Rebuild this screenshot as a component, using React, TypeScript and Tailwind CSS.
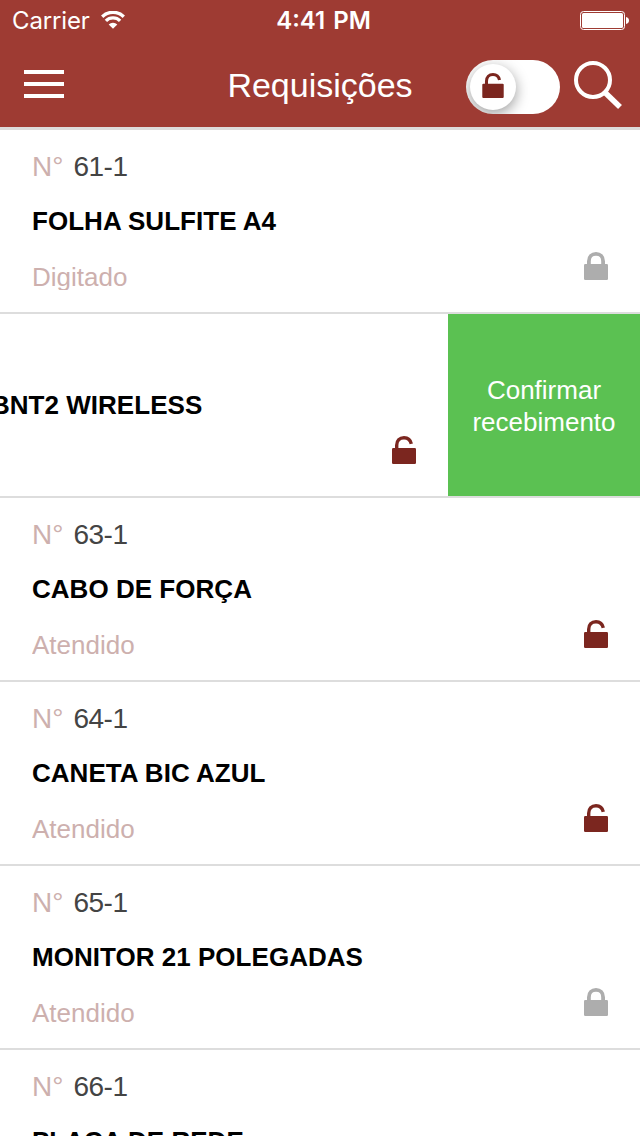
import { useState } from 'react';

type Request = {
  number: string;
  product: string;
  status: string;
  open: boolean;
};

const requests: Request[] = [
  { number: '61-1', product: 'FOLHA SULFITE A4', status: 'Digitado', open: false },
  { number: '62-1', product: 'TECLADO ABNT2 WIRELESS', status: 'Atendido', open: true },
  { number: '63-1', product: 'CABO DE FORÇA', status: 'Atendido', open: true },
  { number: '64-1', product: 'CANETA BIC AZUL', status: 'Atendido', open: true },
  { number: '65-1', product: 'MONITOR 21 POLEGADAS', status: 'Atendido', open: false },
  { number: '66-1', product: 'PLACA DE REDE', status: 'Atendido', open: true }
];

// Padlock, open or closed
function LockIcon({ open, className }: { open: boolean; className?: string }) {
  return (
    <svg viewBox="0 0 24 28" fill="none" className={className}>
      <rect x="0" y="12" width="24" height="16" rx="1.2" fill="currentColor" />
      {open ? (
        <path d="M4.700 13V9.200C4.700 4.700 7.600 1.700 12 1.700c3.700 0 6.500 2.300 7.300 6.200" stroke="currentColor" strokeWidth="3.400" />
      ) : (
        <path d="M4.900 13V9.200C4.900 4.900 7.800 1.900 12 1.900s7.100 3 7.100 7.300V13" stroke="currentColor" strokeWidth="3.800" />
      )}
    </svg>
  );
}

function StatusBar() {
  return (
    <div className="flex h-10 items-center pt-0.5 font-['Inter',sans-serif] text-[24px] leading-[38px] text-white">
      <div className="flex w-[200px] items-center pl-3">
        <span className="w-[78px] tracking-[-0.15px]">Carrier</span>
        <svg viewBox="0 0 24 18" fill="none" className="mb-0.5 ml-[11px] h-[18px] w-6">
          <path d="M1.200 5.700a15.400 15.400 0 0 1 21.600 0" stroke="white" strokeWidth="3.300" />
          <path d="M4.900 9.900a10 10 0 0 1 14.200 0" stroke="white" strokeWidth="3.300" />
          <path d="M7.700 13.500a6 6 0 0 1 8.600 0L12 17.800z" fill="white" />
        </svg>
      </div>
      <div className="flex-1 pl-[7px] text-center font-semibold [word-spacing:2px]">4:41 PM</div>
      <div className="flex w-[200px] justify-end pr-[11px] pb-0.5">
        <svg viewBox="0 0 49 19" fill="none" className="h-[19px] w-[49px]">
          <rect x="0.5" y="0.5" width="44" height="18" rx="3" stroke="white" />
          <rect x="2" y="2" width="41" height="15" rx="1.5" fill="white" />
          <path d="M46 6c2 .4 3 1.700 3 3.500s-1 3.100-3 3.500z" fill="white" />
        </svg>
      </div>
    </div>
  );
}

function Header() {
  const [onlyOpen, setOnlyOpen] = useState(true);

  return (
    <header className="h-[130px] shrink-0 border-b-[3px] border-[#dddbdb] bg-[#9e3b33]">
      <StatusBar />
      <div className="flex items-start">
        <div className="w-[200px] pt-[30px] pl-6">
          <button className="flex w-10 flex-col gap-2" aria-label="Menu">
            <span className="h-1 bg-white" />
            <span className="h-1 bg-white" />
            <span className="h-1 bg-white" />
          </button>
        </div>
        <h1 className="flex-1 pt-[23px] text-center text-[34px] leading-[44px] whitespace-nowrap text-white">
          Requisições
        </h1>
        <div className="flex w-[200px] items-start justify-end gap-[14px] pt-5 pr-[18px]">
          <button
            onClick={() => setOnlyOpen(!onlyOpen)}
            className={`flex h-[54px] w-[94px] overflow-hidden rounded-full bg-white p-1 ${onlyOpen ? 'justify-start' : 'justify-end'}`}
          >
            <span className="flex size-[46px] justify-center rounded-full bg-white pt-[9px] shadow-[0_4px_14px_rgba(0,0,0,0.4)]">
              <LockIcon open={onlyOpen} className="h-[25px] w-[22px] text-[#7b261f]" />
            </span>
          </button>
          <svg viewBox="0 0 48 49" fill="none" className="mt-px h-[49px] w-12">
            <circle cx="19" cy="19" r="17" stroke="white" strokeWidth="4" />
            <path d="M31 31.500L46 46" stroke="white" strokeWidth="5.500" />
          </svg>
        </div>
      </div>
    </header>
  );
}

function RequestRow({ request, swiped }: { request: Request; swiped: boolean }) {
  return (
    <li className={`flex h-[184px] shrink-0 overflow-hidden border-b-2 border-[#dddddd] ${swiped ? 'justify-end' : ''}`}>
      <div className="flex w-full shrink-0 items-end justify-between px-8">
        <div className="h-full pt-[21px]">
          <p className="text-[28px] leading-8 tracking-[-0.5px] text-[#444444]">
            <span className="mr-[10px] tracking-normal text-[#cdb0ae]">N°</span>
            {request.number}
          </p>
          <h2 className="mt-[23px] text-[26px] leading-[30px] font-bold tracking-[0.03px] whitespace-nowrap text-black">
            {request.product}
          </h2>
          <p className="mt-7 h-[26px] overflow-hidden text-[26px] leading-[26px] text-[#cdb0ae]">{request.status}</p>
        </div>
        <LockIcon
          open={request.open}
          className={`mb-8 h-7 w-6 ${request.open ? 'text-[#7b261f]' : 'text-[#adadad]'}`}
        />
      </div>
      {swiped && (
        <button className="w-48 shrink-0 bg-[#5bc152] pt-0.5 text-center text-[26px] leading-8 text-white">
          Confirmar
          <br />
          recebimento
        </button>
      )}
    </li>
  );
}

export default function App() {
  return (
    <div className="flex h-[1136px] w-[640px] flex-col overflow-hidden bg-white font-['Liberation_Sans',Arial,sans-serif]">
      <Header />
      <ul className="flex flex-1 flex-col overflow-hidden">
        {requests.map((request) => (
          <RequestRow key={request.number} request={request} swiped={request.number === '62-1'} />
        ))}
      </ul>
    </div>
  );
}
